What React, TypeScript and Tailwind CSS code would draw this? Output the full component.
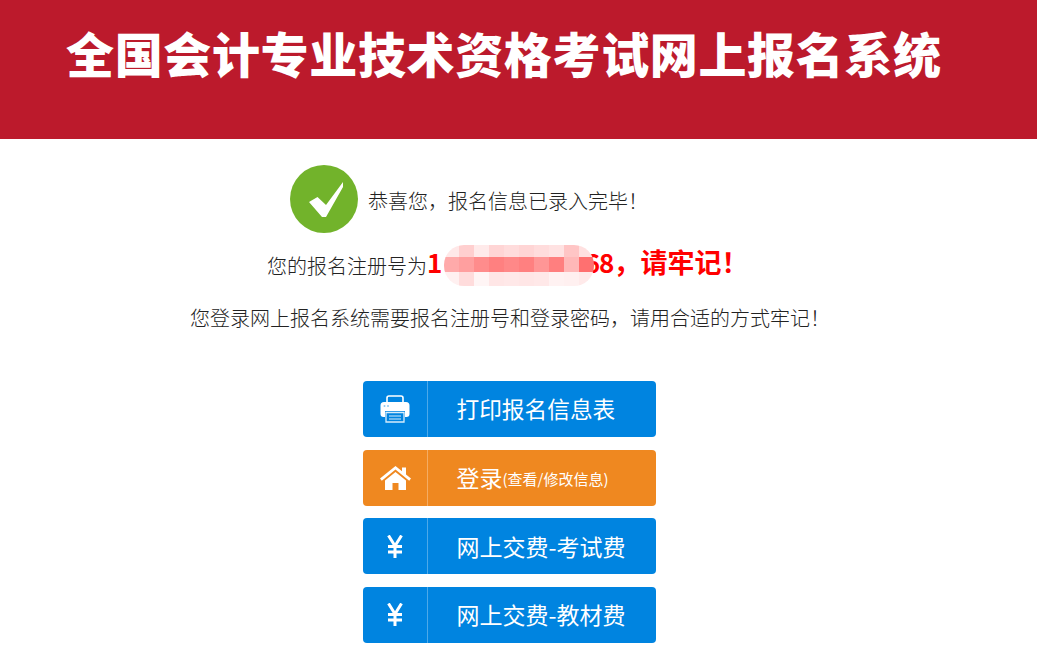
const cjk = "font-['Noto_Sans_CJK_SC','Noto_Sans',sans-serif]";

const top = ["#ffe8e8","#ffcfcf","#ffeaea","#ffd5d5","#ffdcdc","#ffd5d5","#ffdcdc","#ffe2e2","#ffc5c5","#ffe0e0"];
const mid = ["#ffaaaa","#ff9f9f","#ff8c8c","#ff8080","#ff8888","#ff8080","#ff9696","#ff7f7f","#ffb8b8","#ff7070"];
const bot = ["#fff0f0","#ffdcdc","#fff5f5","#ffe6e6","#ffe8e8","#ffe6e6","#ffe8e8","#fff2f2","#fff0f0","#ffeaea"];

function Mosaic() {
  const rows: [string[], string][] = [[top, "h-[12px]"], [mid, "h-[15px]"], [bot, "h-[14px]"]];
  return (
    <span className="absolute left-[17px] top-[-2px] flex h-[41px] w-[150px] flex-col overflow-hidden rounded-[20px]">
      {rows.map(([r, h], i) => (
        <span key={i} className={`flex ${h}`}>
          {r.map((c, j) => (
            <span key={j} className="h-full w-[15px]" style={{ backgroundColor: c }} />
          ))}
        </span>
      ))}
    </span>
  );
}

function Printer() {
  return (
    <svg width="30" height="28" viewBox="0 0 30 28" fill="none">
      <path d="M7 7V3a2 2 0 0 1 2-2h12a2 2 0 0 1 2 2v4" stroke="#fff" strokeWidth="1.6" />
      <path d="M4 7h22a3.5 3.5 0 0 1 3.5 3.5V19a3 3 0 0 1-3 3H25v-6H5v6H3.5a3 3 0 0 1-3-3v-8.500A3.500 3.500 0 0 1 4 7z" fill="#fff" />
      <circle cx="4.500" cy="11" r="1" fill="#8ec8f0" />
      <circle cx="8" cy="11" r="1" fill="#8ec8f0" />
      <path d="M6 17.500h18V27H6z" stroke="#d6ecfb" strokeWidth="1.300" />
      <path d="M9 21h12M9 24h12" stroke="#d6ecfb" strokeWidth="1" />
    </svg>
  );
}

function Home() {
  return (
    <svg width="31" height="24" viewBox="0 0 31 24" fill="#fff">
      <path d="M15.500 0 0 12.500l1.800 2.200L15.500 3.600l13.700 11.100 1.800-2.200-5-4.100V1.500h-4v3.700z" />
      <path d="M15.500 6 5 14.500V24h7.500v-7h6v7H26v-9.500z" />
    </svg>
  );
}

function Yen() {
  return (
    <svg width="16" height="23" viewBox="0 0 16 23" fill="none" stroke="#fff" strokeWidth="3">
      <path d="M1.500 0.500 8 11l6.500-10.500M8 11v12M1 11.500h14M1 17h14" />
    </svg>
  );
}

function Btn({ icon, color, children, size = "text-[23px]" }: { icon: React.ReactNode; color: string; children: React.ReactNode; size?: string }) {
  return (
    <div className={`flex h-[56px] w-[293px] rounded-[4px] text-white ${color}`}>
      <div className="flex w-[65px] items-center justify-center border-r border-white/30">{icon}</div>
      <div className={`flex items-center pl-[28.500px] ${size}`}>{children}</div>
    </div>
  );
}

export default function App() {
  return (
    <div className={`h-[670px] w-full overflow-hidden bg-white text-[20px] font-light text-[#222] ${cjk}`}>
      <header className="flex h-[139px] items-start bg-[#bc1a2c] pl-[66px] pt-[14px]">
        <h1 className="text-[48px] font-black leading-[76px] tracking-[0.65px] text-white">全国会计专业技术资格考试网上报名系统</h1>
      </header>

      <div className="flex items-center pl-[290px] pt-[26px]">
        <div className="flex h-[68px] w-[68px] items-center justify-center rounded-full bg-[#72b32b]">
          <svg className="ml-[3px]" width="34" height="35" viewBox="0 0 34 35" fill="#fff">
            <path d="M0 20 8.500 15 17 23 34 0v5L17 35h-4z" />
          </svg>
        </div>
        <p className="pl-[10px] pt-[4px] leading-[28px]">恭喜您，报名信息已录入完毕！</p>
      </div>

      <div className="mt-[16px] flex h-[30px] items-center pl-[267px]">
        <span className="pt-[4px]">您的报名注册号为</span>
        <span className="mb-[4px] text-[26px] font-bold leading-[30px] text-[#f00]">
          <span className="relative inline-block tracking-[-1px]">
            1<span className="text-transparent">0000000000</span>68
            <Mosaic />
          </span>
          <span className="text-[27px]">，请牢记！</span>
        </span>
      </div>

      <p className="pl-[190px] pt-[25px] leading-[28px]">您登录网上报名系统需要报名注册号和登录密码，请用合适的方式牢记！</p>

      <div className="flex flex-col gap-[12.500px] pl-[363px] pt-[49px] font-normal">
        <Btn color="bg-[#0084e0]" size="text-[22.700px]" icon={<Printer />}>打印报名信息表</Btn>
        <Btn color="bg-[#ef8820]" icon={<Home />}>
          <span>登录</span>
          <span className="pt-[4px] text-[15px]">(查看/修改信息)</span>
        </Btn>
        <Btn color="bg-[#0084e0]" icon={<Yen />}>网上交费-考试费</Btn>
        <Btn color="bg-[#0084e0]" icon={<Yen />}>网上交费-教材费</Btn>
      </div>
    </div>
  );
}
